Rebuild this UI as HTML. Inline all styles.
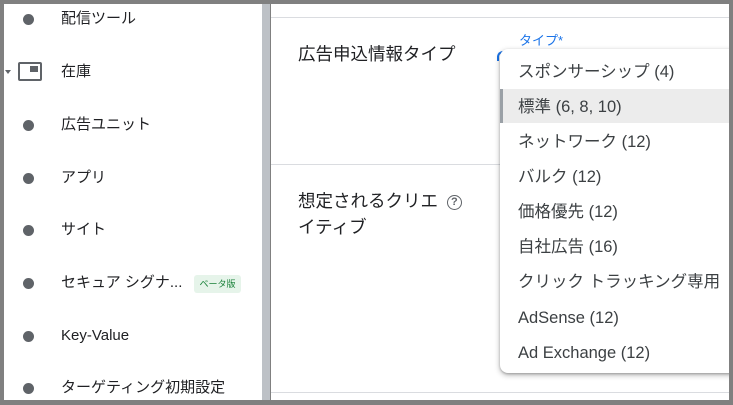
<!DOCTYPE html>
<html><head><meta charset="utf-8"><style>
*{margin:0;padding:0;box-sizing:border-box}
body{width:733px;height:405px;background:#808080;position:relative;overflow:hidden;font-family:"Liberation Sans","Noto Sans CJK JP",sans-serif;color:#3c4043}
.side{position:absolute;left:4px;top:4px;width:258px;height:396px;background:#fff}
.sb{position:absolute;left:262px;top:4px;width:8px;height:396px;background:#bdc1c6}
.main{position:absolute;left:271px;top:4px;width:458px;height:396px;background:#fff}
.it{position:absolute;left:57px;font-size:15px;line-height:20px;white-space:nowrap;color:#202124}
.dot{position:absolute;left:19px;width:11px;height:11px;border-radius:50%;background:#5f6368}
.hl{position:absolute;left:0;right:0;height:1px;background:#dadce0}
.dd{position:absolute;left:500px;top:49px;width:250px;height:324px;background:#fff;border-radius:8px;box-shadow:0 2px 6px rgba(0,0,0,.3),0 1px 2px rgba(0,0,0,.2)}
.o{position:absolute;left:18px;font-size:16.5px;line-height:20px;white-space:nowrap;color:#3c4043}
.lab{position:absolute;font-size:17.5px;color:#202124;white-space:nowrap}
</style></head><body>
<div class="side">
<div class="dot" style="top:10px"></div><div class="it" style="top:5px">配信ツール</div>
<div style="position:absolute;left:1px;top:66px;width:0;height:0;border-left:3px solid transparent;border-right:3px solid transparent;border-top:4px solid #5f6368"></div>
<div style="position:absolute;left:14px;top:58px;width:24px;height:19px;border:2px solid #5f6368;border-radius:2px"></div>
<div style="position:absolute;left:26px;top:62px;width:8px;height:6px;background:#5f6368"></div>
<div class="it" style="top:58px">在庫</div>
<div class="dot" style="top:116px"></div><div class="it" style="top:111px">広告ユニット</div>
<div class="dot" style="top:169px"></div><div class="it" style="top:164px">アプリ</div>
<div class="dot" style="top:221px"></div><div class="it" style="top:216px">サイト</div>
<div class="dot" style="top:274px"></div><div class="it" style="top:269px">セキュア シグナ...</div>
<div style="position:absolute;left:190px;top:271px;width:47px;height:18px;background:#e6f4ea;border-radius:3px;color:#188038;font-size:9px;line-height:18px;text-align:center">ベータ版</div>
<div class="dot" style="top:327px"></div><div class="it" style="top:322px">Key-Value</div>
<div class="dot" style="top:379px"></div><div class="it" style="top:374px">ターゲティング初期設定</div>
</div>
<div class="sb"></div>
<div class="main">
<div class="hl" style="top:13px"></div>
<div class="hl" style="top:160px"></div>
<div class="hl" style="top:388px"></div>
<div class="lab" style="left:27px;top:37px">広告申込情報タイプ</div>
<div style="position:absolute;left:248px;top:26px;font-size:13px;color:#1a73e8">タイプ*</div>
<div style="position:absolute;left:226px;top:47px;width:10px;height:10px;border-left:2px solid #1a73e8;border-top:2px solid #1a73e8;border-radius:6px 0 0 0"></div>
<div class="lab" style="left:27px;top:184px">想定されるクリエ <span style="display:inline-block;width:15px;height:15px;border:1.8px solid #5f6368;border-radius:50%;font-size:11px;line-height:12px;text-align:center;vertical-align:2px;color:#5f6368;font-weight:bold;margin-left:4px">?</span></div>
<div class="lab" style="left:27px;top:210px">イティブ</div>
</div>
<div class="dd">
<div style="position:absolute;left:0;right:0;top:40px;height:34px;background:#ececec;border-left:3px solid #9aa0a6"></div>
<div class="o" style="top:13px">スポンサーシップ (4)</div>
<div class="o" style="top:48px">標準 (6, 8, 10)</div>
<div class="o" style="top:83px">ネットワーク (12)</div>
<div class="o" style="top:118px">バルク (12)</div>
<div class="o" style="top:153px">価格優先 (12)</div>
<div class="o" style="top:188px">自社広告 (16)</div>
<div class="o" style="top:223px">クリック トラッキング専用</div>
<div class="o" style="top:259px">AdSense (12)</div>
<div class="o" style="top:294px">Ad Exchange (12)</div>
</div>
<div style="position:absolute;left:729px;top:0;width:4px;height:405px;background:#808080"></div>
</body></html>
